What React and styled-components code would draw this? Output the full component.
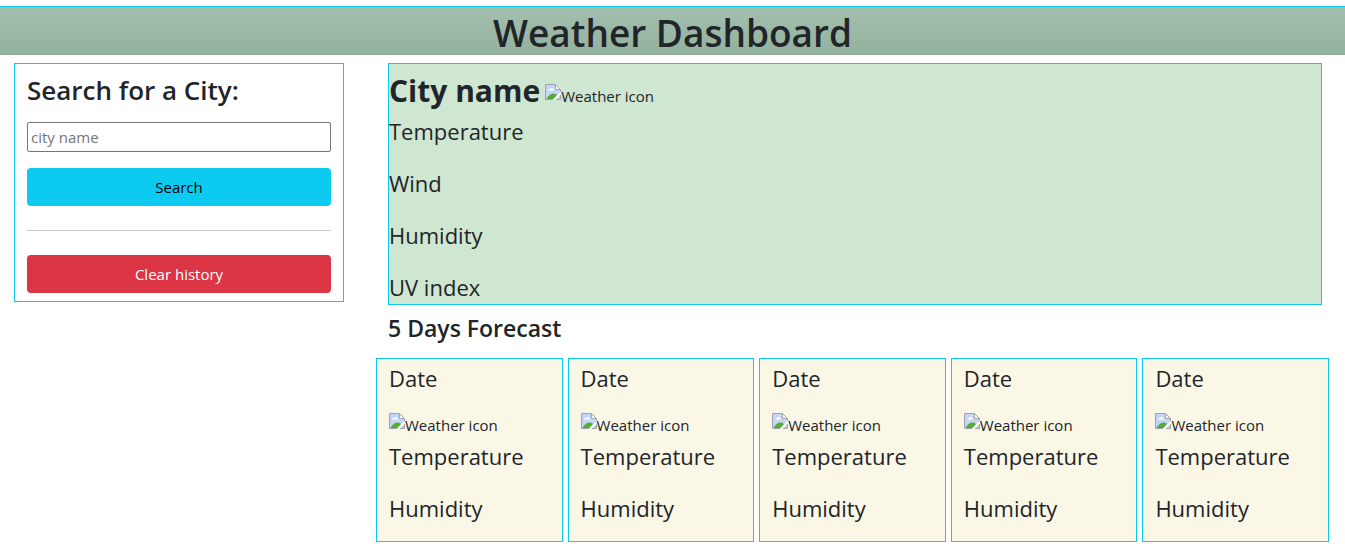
import React from "react";
import styled, { createGlobalStyle } from "styled-components";

const GlobalStyle = createGlobalStyle`
  *, *::before, *::after { box-sizing: border-box; }
  body {
    margin: 0;
    background: #fff;
    color: #212529;
    font-family: "Segoe UI", "Open Sans", "Noto Sans", sans-serif;
    font-size: 15px;
    line-height: 24px;
  }
  h1, h2, h3, p { margin: 0; }
`;

const Header = styled.header`
  margin-top: 6px;
  padding-top: 4px;
  border-top: 1px solid #0dcaf0;
  background: linear-gradient(#a3bfad, #94b09e);
  text-align: center;
`;

const Title = styled.h1`
  font-size: 37px;
  font-weight: 600;
  line-height: 44px;
`;

const Layout = styled.main`
  display: grid;
  grid-template-columns: minmax(0, 330fr) minmax(0, 953fr);
  align-items: start;
  gap: 32px;
  padding: 8px 16px 5px 14px;
`;

const SearchPanel = styled.form`
  display: flex;
  flex-direction: column;
  padding: 10px 12px 8px;
  border: 1px solid #0dcaf0;
`;

const PanelTitle = styled.label`
  margin-bottom: 16px;
  font-size: 26px;
  font-weight: 600;
  line-height: 32px;
`;

const CityInput = styled.input`
  width: 100%;
  height: 30px;
  margin-bottom: 16px;
  padding: 1px 3px;
  border: 1px solid #767676;
  border-radius: 2px;
  background: #fff;
  color: #212529;
  font: inherit;
  &::placeholder { color: #757575; opacity: 1; }
`;

const Button = styled.button`
  height: 38px;
  border: 0;
  border-radius: 4px;
  background: ${(p) => (p.$danger ? "#dc3545" : "#0dcaf0")};
  color: ${(p) => (p.$danger ? "#fff" : "#000")};
  font: inherit;
  cursor: pointer;
`;

const Divider = styled.hr`
  width: 100%;
  height: 1px;
  margin: 24px 0;
  border: 0;
  background: #c8c9ca;
`;

const CurrentWeather = styled.section`
  margin: 0 7px 0 12px;
  border: 1px solid #0dcaf0;
  background: #cfe6d0;
`;

const CityRow = styled.div`
  display: flex;
  align-items: baseline;
  gap: 5px;
  height: 48px;
`;

const CityName = styled.h2`
  font-size: 30px;
  font-weight: 700;
  line-height: 54px;
`;

const Readings = styled.div`
  display: flex;
  flex-direction: column;
  gap: 16px;
`;

const Reading = styled.p`
  padding-top: 2px;
  font-size: 22px;
  line-height: 34px;
`;

const ForecastTitle = styled.h3`
  margin: 9px 12px 15px;
  font-size: 23px;
  font-weight: 600;
  line-height: 29px;
`;

const ForecastGrid = styled.section`
  display: grid;
  grid-template-columns: repeat(5, minmax(0, 1fr));
  gap: 5px;
`;

const DayCard = styled.article`
  padding: 0 12px 16px;
  border: 1px solid #0dcaf0;
  background: #fbf7e6;
`;

const DayIcon = styled.div`
  height: 24px;
  margin-top: 18px;
`;

const IconLabel = styled.span`
  display: inline-flex;
  align-items: baseline;
  white-space: nowrap;
`;

const BrokenImage = styled.svg`
  flex: none;
  align-self: flex-start;
  width: 16px;
  height: 16px;
`;

function WeatherIcon() {
  return (
    <IconLabel>
      <BrokenImage viewBox="0 0 16 16" aria-hidden="true">
        <path d="M0 0H11L16 5V8L8 16H0Z" fill="#fff" />
        <path d="M1 1H10V6H15V8.5L9 15H1Z" fill="#c3d6f7" />
        <path d="M3 6.5C3 5 4.5 5 5 5C5.5 3.5 8 3.8 8 5.3C9 5.3 9 6.5 8.5 6.5Z" fill="#fff" />
        <path d="M1.5 15C3 11.5 6 9.5 8.5 9.5C10 9.5 11 10 12 11L8.5 15Z" fill="#55ab36" />
        <path d="M15 11V15H11Z" fill="#b9d9ae" />
        <path d="M8 16L16 7.5V10.5L10.5 16Z" fill="#fff" />
        <path d="M8 15.5H.5V.5H10.5L15.5 5.5V8M15.5 11V15.5H11M10.5 .5V5.5H15.5" fill="none" stroke="#a0a3a7" />
      </BrokenImage>
      <span>Weather icon</span>
    </IconLabel>
  );
}

const days = [1, 2, 3, 4, 5];

export default function App() {
  return (
    <>
      <GlobalStyle />
      <Header>
        <Title>Weather Dashboard</Title>
      </Header>
      <Layout>
        <SearchPanel onSubmit={(e) => e.preventDefault()}>
          <PanelTitle htmlFor="city">Search for a City:</PanelTitle>
          <CityInput id="city" type="text" placeholder="city name" />
          <Button type="submit">Search</Button>
          <Divider />
          <Button type="button" $danger>Clear history</Button>
        </SearchPanel>
        <div>
          <CurrentWeather>
            <CityRow>
              <CityName>City name</CityName>
              <WeatherIcon />
            </CityRow>
            <Readings>
              <Reading>Temperature</Reading>
              <Reading>Wind</Reading>
              <Reading>Humidity</Reading>
              <Reading>UV index</Reading>
            </Readings>
          </CurrentWeather>
          <ForecastTitle>5 Days Forecast</ForecastTitle>
          <ForecastGrid>
            {days.map((day) => (
              <DayCard key={day}>
                <Reading>Date</Reading>
                <DayIcon>
                  <WeatherIcon />
                </DayIcon>
                <Readings>
                  <Reading>Temperature</Reading>
                  <Reading>Humidity</Reading>
                </Readings>
              </DayCard>
            ))}
          </ForecastGrid>
        </div>
      </Layout>
    </>
  );
}
